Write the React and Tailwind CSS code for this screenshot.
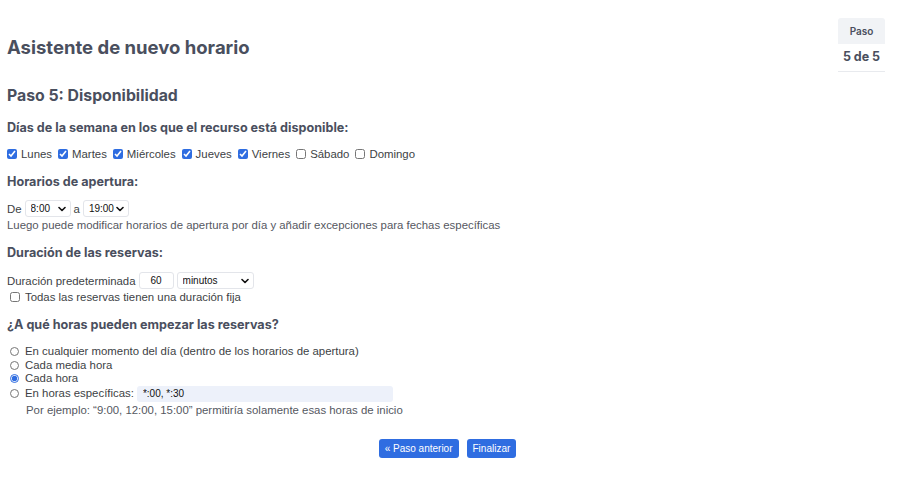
import { useState } from "react";

const Chevron = () => (
    <svg
        className="pointer-events-none absolute right-[5px] top-1/2 -translate-y-1/2"
        width="8"
        height="6"
        viewBox="0 0 8 6"
        fill="none"
    >
        <path d="M1 1.5 4 4.5 7 1.5" stroke="#111" strokeWidth="1.6" strokeLinecap="round" strokeLinejoin="round" />
    </svg>
);

function Select({ value, options, className }) {
    return (
        <span className={"relative inline-block " + className}>
            <select
                defaultValue={value}
                className="h-[17px] w-full appearance-none rounded-[3px] border border-[#e3e5ea] bg-white pl-[5px] pr-[12px] text-[10px] leading-[15px] text-[#111] outline-none"
            >
                {options.map((o) => (
                    <option key={o}>{o}</option>
                ))}
            </select>
            <Chevron />
        </span>
    );
}

const days = [
    ["Lunes", true],
    ["Martes", true],
    ["Miércoles", true],
    ["Jueves", true],
    ["Viernes", true],
    ["Sábado", false],
    ["Domingo", false],
];

const Heading = ({ children, className = "" }) => (
    <h3
        className={"text-[12.6px] font-bold leading-[18px] text-[#4a4f5e] " + className}
        style={{ fontFamily: "Inter, sans-serif" }}
    >
        {children}
    </h3>
);

export default function App() {
    const [start, setStart] = useState("hour");

    const radios = [
        ["any", "En cualquier momento del día (dentro de los horarios de apertura)"],
        ["half", "Cada media hora"],
        ["hour", "Cada hora"],
    ];

    return (
        <div
            className="min-h-[477px] bg-white pl-[7px] pr-[15px] text-[11.4px] text-[#3d3f45]"
            style={{ fontFamily: "'Liberation Sans', Arial, sans-serif" }}
        >
            <div className="flex items-start justify-between">
                <h1
                    className="pt-[36px] text-[18.5px] font-bold leading-[22px] text-[#4a4f5e]"
                    style={{ fontFamily: "Inter, sans-serif" }}
                >
                    Asistente de nuevo horario
                </h1>
                <div
                    className="mt-[18px] w-[47px] border-b border-[#e8eaee] text-center text-[#4a4f5e]"
                    style={{ fontFamily: "Inter, sans-serif" }}
                >
                    <div className="flex h-[26px] items-center justify-center rounded-t-[3px] bg-[#f1f3f6] text-[10px] font-semibold">
                        Paso
                    </div>
                    <div className="flex h-[27px] items-center justify-center text-[12.5px] font-bold">
                        5 de 5
                    </div>
                </div>
            </div>

            <h2
                className="mt-[14px] text-[15.8px] font-bold leading-[20px] text-[#4a4f5e]"
                style={{ fontFamily: "Inter, sans-serif" }}
            >
                Paso 5: Disponibilidad
            </h2>
            <Heading className="mt-[13px]">
                Días de la semana en los que el recurso está disponible:
            </Heading>

            <div className="mt-[10px] flex items-center gap-[6px] leading-[14px]">
                {days.map(([d, c]) => (
                    <label key={d} className="flex items-center gap-[4px]">
                        <input type="checkbox" defaultChecked={c} className="m-0 h-[10px] w-[10px] accent-[#2f6de1]" />
                        {d}
                    </label>
                ))}
            </div>

            <Heading className="mt-[12px]">Horarios de apertura:</Heading>
            <div className="mt-[9px] flex items-center gap-[3px] leading-[14px]">
                De
                <Select value="8:00" options={["7:00", "8:00", "9:00"]} className="w-[46px]" />
                a
                <Select value="19:00" options={["18:00", "19:00", "20:00"]} className="w-[46px]" />
            </div>
            <p className="mt-[1px] leading-[14px] text-[#55585f]">
                Luego puede modificar horarios de apertura por día y añadir excepciones para fechas específicas
            </p>

            <Heading className="mt-[12px]">Duración de las reservas:</Heading>
            <div className="mt-[10px] flex items-center gap-[3px] leading-[14px]">
                Duración predeterminada
                <input
                    defaultValue="60"
                    className="h-[17px] w-[35px] rounded-[3px] border border-[#e3e5ea] bg-white text-center text-[10px] text-[#111] outline-none"
                />
                <Select value="minutos" options={["minutos", "horas"]} className="w-[77px]" />
            </div>
            <label className="mt-[1px] flex items-center gap-[5px] pl-[3px] leading-[14px]">
                <input type="checkbox" className="m-0 h-[10px] w-[10px]" />
                Todas las reservas tienen una duración fija
            </label>

            <Heading className="mt-[12px]">¿A qué horas pueden empezar las reservas?</Heading>
            <div className="mt-[11px] flex flex-col pl-[3px] leading-[13.5px]">
                {radios.map(([k, t]) => (
                    <label key={k} className="flex items-center gap-[6px]">
                        <input
                            type="radio"
                            name="start"
                            checked={start === k}
                            onChange={() => setStart(k)}
                            className="m-0 h-[9px] w-[9px] accent-[#2f6de1]"
                        />
                        {t}
                    </label>
                ))}
                <label className="flex items-center gap-[6px]">
                    <input
                        type="radio"
                        name="start"
                        checked={start === "specific"}
                        onChange={() => setStart("specific")}
                        className="m-0 h-[9px] w-[9px] accent-[#2f6de1]"
                    />
                    En horas específicas:
                    <input
                        defaultValue="*:00, *:30"
                        className="ml-[-3px] h-[16px] w-[256px] rounded-[3px] bg-[#edf1fa] px-[6px] text-[10px] text-[#111] outline-none"
                    />
                </label>
                <p className="mt-[2px] pl-[16px] text-[#55585f]">
                    Por ejemplo: “9:00, 12:00, 15:00” permitiría solamente esas horas de inicio
                </p>
            </div>

            <div className="mt-[22px] flex justify-center gap-[8px] pl-[3px]">
                <button className="h-[19px] rounded-[3px] bg-[#2f6de1] px-[6px] text-[10px] leading-[19px] text-white">
                    « Paso anterior
                </button>
                <button className="h-[19px] rounded-[3px] bg-[#2f6de1] px-[6px] text-[10px] leading-[19px] text-white">
                    Finalizar
                </button>
            </div>
        </div>
    );
}
